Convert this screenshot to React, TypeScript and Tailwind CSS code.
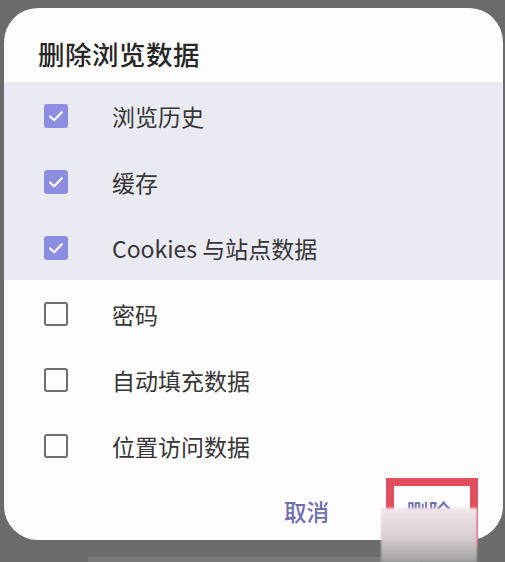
import React from "react";

const rows = [
  { label: "浏览历史", checked: true },
  { label: "缓存", checked: true },
  { label: "Cookies 与站点数据", checked: true },
  { label: "密码", checked: false },
  { label: "自动填充数据", checked: false },
  { label: "位置访问数据", checked: false },
];

function Box({ checked }: { checked: boolean }) {
  if (checked) {
    return (
      <div className="w-[24px] h-[24px] rounded-[3px] bg-[#8e8ee0] flex items-center justify-center shrink-0">
        <svg width="18" height="18" viewBox="0 0 16 16" fill="none">
          <path d="M2.8 8.4 L6.3 11.7 L13.2 4.6" stroke="#ffffff" strokeWidth="1.9" strokeLinecap="round" strokeLinejoin="round" />
        </svg>
      </div>
    );
  }
  return <div className="w-[24px] h-[24px] rounded-[3px] border-[2.5px] border-[#6f6f6f] shrink-0" />;
}

export default function App() {
  return (
    <div
      className="relative w-[505px] h-[562px] bg-[#6b6b6b] overflow-hidden flex flex-col"
      style={{ fontFamily: '"Noto Sans CJK SC", "Noto Sans", sans-serif' }}
    >
      <div className="ml-[4px] mt-[8px] w-[499px] h-[532px] bg-[#fdfdfd] rounded-[34px] overflow-hidden flex flex-col shrink-0">
        <div className="h-[74px] flex items-center pl-[34px] pt-[18px]">
          <span className="text-[26.5px] font-medium text-[#262626] tracking-[0.5px]">删除浏览数据</span>
        </div>
        <div className="bg-[#eaeaf3]">
          {rows.slice(0, 3).map((r) => (
            <div key={r.label} className="h-[66px] flex items-center pl-[40px] pt-[2px]">
              <Box checked={r.checked} />
              <span className="ml-[44px] text-[23px] text-[#363636]">{r.label}</span>
            </div>
          ))}
        </div>
        {rows.slice(3).map((r) => (
          <div key={r.label} className="h-[66px] flex items-center pl-[40px] pt-[2px]">
            <Box checked={r.checked} />
            <span className="ml-[44px] text-[23px] text-[#363636]">{r.label}</span>
          </div>
        ))}
        <div className="flex-1 flex items-center justify-end pt-[6px]">
          <span className="text-[22.5px] font-medium text-[#6d6db2] mr-[77px]">取消</span>
          <span className="text-[22.5px] font-medium text-[#6d6db2] mr-[52px]">删除</span>
        </div>
      </div>
      <div className="mt-[17px] ml-[88px] w-[332px] h-[5px] bg-[#7a7a7a]" />
      <div className="absolute left-[386px] top-[478px] w-[92px] h-[70px] border-[8px] border-[#e2505f]" />
      <div className="absolute left-[381px] top-[508px] w-[96px] h-[54px] bg-gradient-to-b from-[#f2e6ea] via-[#dcd2d5] to-[#a2a2a2] blur-[1px]" />
    </div>
  );
}
